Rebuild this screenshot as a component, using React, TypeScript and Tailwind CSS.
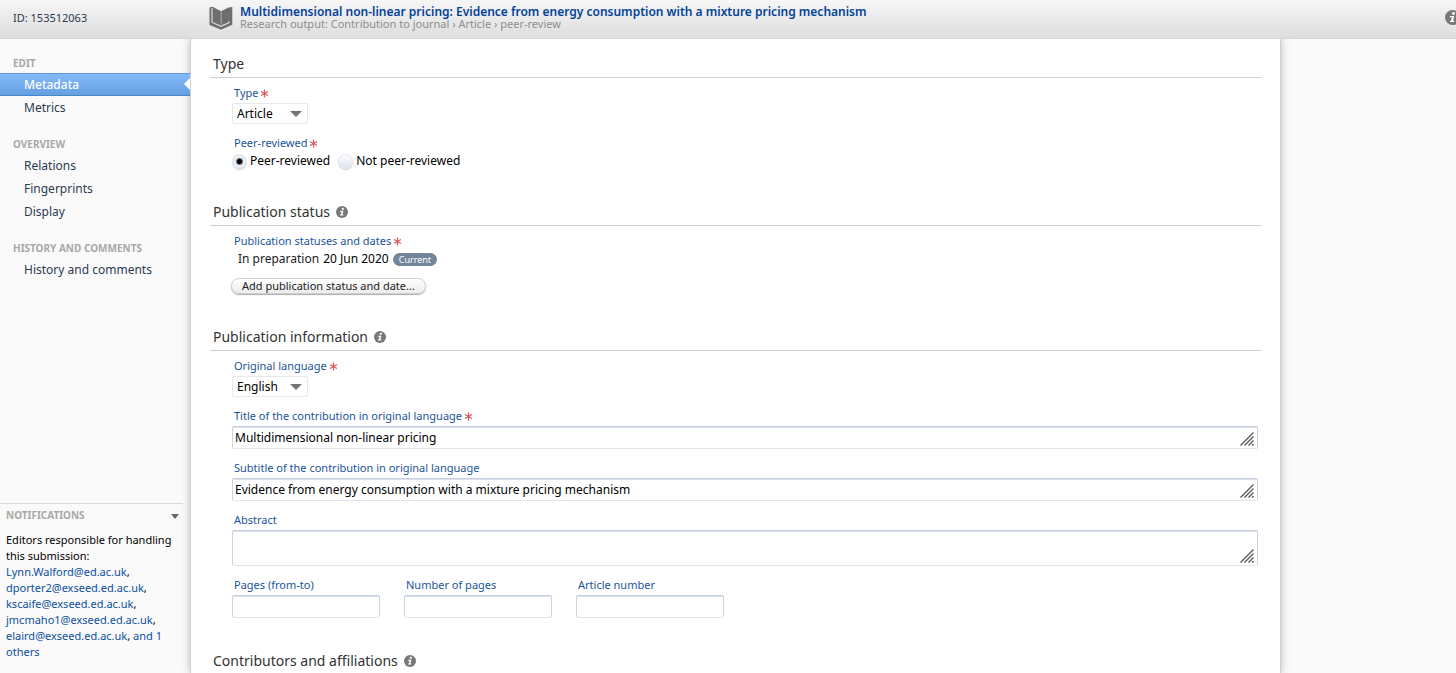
import type { ReactNode } from "react";

function InfoIcon({ size = 12 }: { size?: number }) {
  return (
    <svg width={size} height={size} viewBox="0 0 24 24" aria-hidden="true" className="shrink-0">
      <circle cx="12" cy="12" r="12" fill="#787878" />
      <circle cx="13.6" cy="5.6" r="2.3" fill="#fff" />
      <path d="M8.2 9.6h6.6l-2 7.6h2.2l-.5 2H7.8l.5-2h1.3l1.5-5.6H7.7z" fill="#fff" />
    </svg>
  );
}

function Required() {
  return (
    <svg width="9" height="9" viewBox="0 0 18 18" aria-label="required" className="shrink-0">
      <path d="M9 1v16M2 5l14 8M16 5L2 13" stroke="#d95c5c" strokeWidth="2.6" fill="none" />
    </svg>
  );
}

function BookIcon() {
  return (
    <svg width="24" height="24" viewBox="0 0 24 24" aria-hidden="true" className="shrink-0">
      <path d="M0.5 1.5L3.4 0.8L12 5.2L19.6 1.6L23.3 1V18.8L12 23.8L0.5 19z" fill="#6e6e6e" />
      <path d="M3 2v14.2l8.8 4.2l8-3.6v-1.6" stroke="#dcdcdc" strokeWidth="1.2" fill="none" />
      <path d="M12.2 5.4v13.2" stroke="#b4b4b4" strokeWidth="0.9" fill="none" />
    </svg>
  );
}

function Grip() {
  return (
    <svg
      width="14"
      height="14"
      viewBox="0 0 14 14"
      aria-hidden="true"
      className="pointer-events-none absolute right-1 bottom-[3px]"
    >
      <path d="M0.5 13.5l13-13M4.5 13.5l9-9M8.5 13.5l5-5M12 13.5l1.5-1.5" stroke="#555" strokeWidth="1.3" fill="none" />
    </svg>
  );
}

function Label({ id, required, children }: { id?: string; required?: boolean; children: ReactNode }) {
  return (
    <label htmlFor={id} className="ml-0.5 flex h-4 items-center gap-0.5 text-[11px] leading-4 text-[#1a5498]">
      {children}
      {required && <Required />}
    </label>
  );
}

function Field({ id, label, required, children }: { id?: string; label: string; required?: boolean; children: ReactNode }) {
  return (
    <div className="flex flex-col gap-0.5">
      <Label id={id} required={required}>{label}</Label>
      {children}
    </div>
  );
}

function Section({ title, info, children }: { title: string; info?: boolean; children?: ReactNode }) {
  return (
    <section className="mb-[31px]">
      <h2 className="flex h-[26px] items-center gap-1.5 border-b border-[#cfcfcf] pb-px pl-[3px] text-sm text-[#333]">
        {title}
        {info && <InfoIcon />}
      </h2>
      {children && <div className="mr-[3px] ml-[22px] flex flex-col gap-[11px] pt-[7px]">{children}</div>}
    </section>
  );
}

function Dropdown({ id, value }: { id: string; value: string }) {
  return (
    <div className="relative w-19">
      <select
        id={id}
        className="block h-[21px] w-full appearance-none rounded-xs border border-[#e8e8e8] bg-white pl-1 text-xs text-black"
      >
        <option>{value}</option>
      </select>
      <svg width="12" height="6" viewBox="0 0 12 6" aria-hidden="true" className="pointer-events-none absolute top-2 right-1.5">
        <path d="M0 0h12L6 6z" fill="#757575" />
      </svg>
    </div>
  );
}

const box =
  "block w-full resize-none rounded-xs border border-[#dfe4ef] border-t-[#c3cddd] border-l-[#cbd4e2] border-r-[#cbd4e2] bg-white px-0.5 text-xs leading-[22px] text-black shadow-[inset_0_1px_0_#dde3ec]";

function Area({ id, value, tall }: { id: string; value?: string; tall?: boolean }) {
  return (
    <div className="relative">
      <textarea id={id} defaultValue={value} className={`${box} overflow-hidden ${tall ? "h-9" : "h-[23px]"}`} />
      <Grip />
    </div>
  );
}

function Radio({ label, checked }: { label: string; checked?: boolean }) {
  return (
    <label className="flex items-center gap-[3px] text-xs leading-4 text-black">
      <input
        type="radio"
        name="peer"
        defaultChecked={checked}
        className="size-[15px] appearance-none rounded-full border border-[#dfe4ea] bg-linear-to-b from-[#fdfdfe] to-[#dbe4ee] bg-center shadow-[0_1px_1px_#c8cfd8] checked:bg-[radial-gradient(circle,#000_0_2px,#e9eef4_4px)]"
      />
      {label}
    </label>
  );
}

const groups = [
  { title: "EDIT", items: ["Metadata", "Metrics"] },
  { title: "OVERVIEW", items: ["Relations", "Fingerprints", "Display"] },
  { title: "HISTORY AND COMMENTS", items: ["History and comments"] },
];

const editors = [
  "Lynn.Walford@ed.ac.uk",
  "dporter2@exseed.ed.ac.uk",
  "kscaife@exseed.ed.ac.uk",
  "jmcmaho1@exseed.ed.ac.uk",
  "elaird@exseed.ed.ac.uk",
];

export default function App() {
  return (
    <div className="flex h-screen flex-col overflow-hidden bg-[#fafafa] font-['Noto_Sans',sans-serif] text-xs">
      <header className="z-20 flex h-[39px] shrink-0 border-b border-[#d6d6d6] bg-linear-to-b from-[#f6f6f6] to-[#dedede]">
        <div className="w-[209px] shrink-0 pt-[9px] pl-[13px] text-[11px] leading-[18px] text-[#2b3a4f]">ID: 153512063</div>
        <div className="flex min-w-0 flex-1 gap-[7px] pt-1.5">
          <BookIcon />
          <div>
            <h1 className="text-xs leading-3 font-semibold text-[#03429a]">
              Multidimensional non-linear pricing: Evidence from energy consumption with a mixture pricing mechanism
            </h1>
            <p className="text-[11px] leading-3 text-[#8e8e8e]">
              Research output: Contribution to journal › Article › peer-review
            </p>
          </div>
        </div>
        <button aria-label="Information" className="-mr-1 flex pt-2.5">
          <InfoIcon size={15} />
        </button>
      </header>

      <div className="flex min-h-0 flex-1">
        <aside className="flex w-[190px] shrink-0 flex-col justify-between">
          <nav className="flex flex-col gap-[17px] pt-4">
            {groups.map((group) => (
              <div key={group.title}>
                <h3 className="mb-0.5 pl-[13px] text-[10px] leading-4 font-bold text-[#a8a8a8]">{group.title}</h3>
                {group.items.map((item) =>
                  item === "Metadata" ? (
                    <a
                      key={item}
                      href="#metadata"
                      className="relative z-10 flex h-[23px] items-center border-y border-t-[#5d97d8] border-b-[#4a85c6] bg-linear-to-b from-[#85bafa] to-[#649fe0] pl-6 font-medium text-white"
                    >
                      {item}
                      <svg width="6" height="12" viewBox="0 0 6 12" aria-hidden="true" className="absolute top-1 right-0">
                        <path d="M6 0v12L0 6z" fill="#fff" />
                      </svg>
                    </a>
                  ) : (
                    <a key={item} href="#section" className="flex h-[23px] items-center pl-6 text-[#2b3a4f]">
                      {item}
                    </a>
                  ),
                )}
              </div>
            ))}
          </nav>
          <div className="mr-[7px] border-t border-[#d3dae3] pb-[13px] pl-1.5">
            <button className="flex h-6 w-full items-center justify-between pr-1 text-[10px] font-bold text-[#a8a8a8]">
              NOTIFICATIONS
              <svg width="8" height="5" viewBox="0 0 8 5" aria-hidden="true">
                <path d="M0 0h8L4 5z" fill="#666" />
              </svg>
            </button>
            <p className="pt-1 text-[11px] leading-4 text-black">
              Editors responsible for handling this submission:
              {editors.map((editor) => (
                <span key={editor}>
                  {" "}
                  <a href={`mailto:${editor}`} className="text-[#0b4fa0]">{editor}</a>,
                </span>
              ))}{" "}
              <a href="#others" className="text-[#0b4fa0]">and 1 others</a>
            </p>
          </div>
        </aside>

        <main className="min-w-0 flex-1 border-x border-[#cdd1d8] bg-white shadow-[0_0_8px_rgba(60,70,90,0.35)]">
          <div className="h-full overflow-y-auto px-[19px] pt-[13px] [scrollbar-width:none]">
            <Section title="Type">
              <Field id="type" label="Type" required>
                <Dropdown id="type" value="Article" />
              </Field>
              <Field label="Peer-reviewed" required>
                <div className="flex h-4 items-center gap-2">
                  <Radio label="Peer-reviewed" checked />
                  <Radio label="Not peer-reviewed" />
                </div>
              </Field>
            </Section>

            <Section title="Publication status" info>
              <Field label="Publication statuses and dates" required>
                <div className="flex h-4 items-center gap-1 pl-1.5 leading-4">
                  <span className="text-[#222]">In preparation</span>
                  <span className="text-black">20 Jun 2020</span>
                  <span className="rounded-full bg-[#74859a] px-1.5 text-[9px] leading-[13px] text-white">Current</span>
                </div>
              </Field>
              <button className="-ml-px h-4 self-start rounded-full border border-[#d0d0d0] bg-linear-to-b from-white to-[#ececec] px-2.5 text-[11px] leading-[14px] text-[#222] shadow-[0_1px_1px_#aaa]">
                Add publication status and date...
              </button>
            </Section>

            <Section title="Publication information" info>
              <Field id="language" label="Original language" required>
                <Dropdown id="language" value="English" />
              </Field>
              <Field id="title" label="Title of the contribution in original language" required>
                <Area id="title" value="Multidimensional non-linear pricing" />
              </Field>
              <Field id="subtitle" label="Subtitle of the contribution in original language">
                <Area id="subtitle" value="Evidence from energy consumption with a mixture pricing mechanism" />
              </Field>
              <Field id="abstract" label="Abstract">
                <Area id="abstract" tall />
              </Field>
              <div className="flex gap-6">
                {["Pages (from-to)", "Number of pages", "Article number"].map((name) => (
                  <div key={name} className="w-[148px]">
                    <Field id={name} label={name}>
                      <input id={name} type="text" className={`${box} h-[23px]`} />
                    </Field>
                  </div>
                ))}
              </div>
            </Section>

            <Section title="Contributors and affiliations" info />
          </div>
        </main>
        <div className="w-[175px] shrink-0" />
      </div>
    </div>
  );
}
